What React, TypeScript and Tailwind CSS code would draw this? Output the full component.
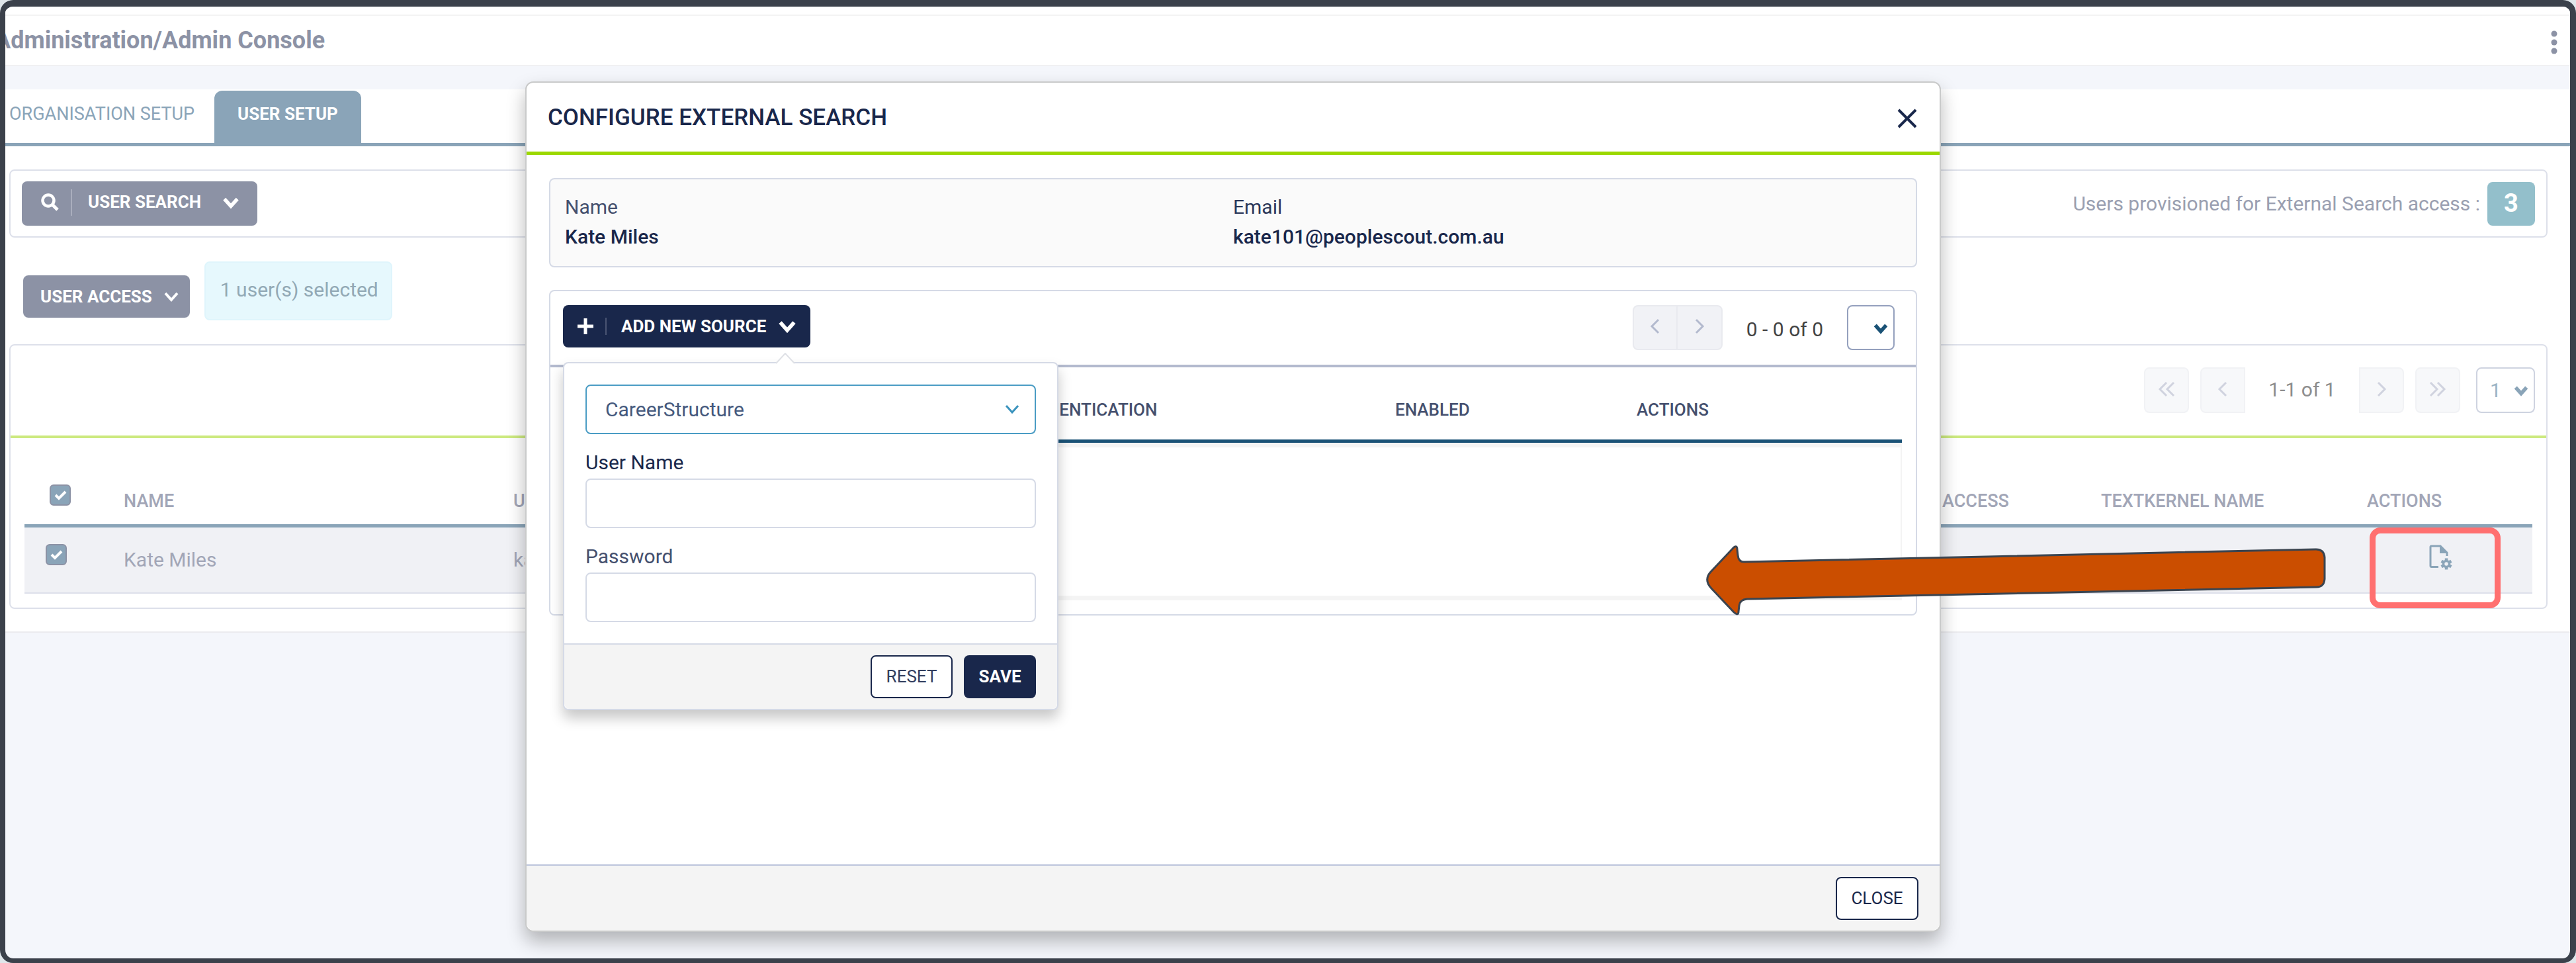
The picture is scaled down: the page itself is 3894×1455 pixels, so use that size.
import type { ReactNode } from "react";

type Dir = "left" | "right" | "down";

const CHEVRON: Record<Dir, string> = {
  left: "M17 2 L7 12 L17 22",
  right: "M7 2 L17 12 L7 22",
  down: "M3 7 L12 17 L21 7",
};

function Chevron({ dir, className, stroke = 3 }: { dir: Dir; className: string; stroke?: number }) {
  return (
    <svg viewBox="0 0 24 24" fill="none" stroke="currentColor" strokeWidth={stroke} className={className} aria-hidden="true">
      <path d={CHEVRON[dir]} />
    </svg>
  );
}

function DoubleChevron({ dir }: { dir: "left" | "right" }) {
  return (
    <svg viewBox="0 0 28 24" fill="none" stroke="currentColor" strokeWidth={3} className="h-6 w-7" aria-hidden="true">
      {dir === "left" ? <path d="M14 2 L4 12 L14 22 M25 2 L15 12 L25 22" /> : <path d="M3 2 L13 12 L3 22 M14 2 L24 12 L14 22" />}
    </svg>
  );
}

function SearchIcon() {
  return (
    <svg viewBox="0 0 27 27" fill="none" stroke="currentColor" className="h-[27px] w-[27px]" aria-hidden="true">
      <circle cx="11" cy="11" r="8.5" strokeWidth="4.5" />
      <path d="M17 17 L25 25" strokeWidth="5" />
    </svg>
  );
}

function FileGearIcon() {
  const teeth = [0, 60, 120, 180, 240, 300];
  return (
    <svg viewBox="0 0 35 38" className="h-[38px] w-[35px]" fill="none" stroke="currentColor" aria-hidden="true">
      <path d="M14 33.5 H3.5 Q2 33.5 2 32 V3.5 Q2 2 3.5 2 H17 L27 12 V17" strokeWidth="3" />
      <path d="M16 1 L28 13 H16 Z" fill="currentColor" stroke="none" />
      <circle cx="26" cy="29" r="4.5" strokeWidth="3.5" />
      {teeth.map((a) => (
        <path key={a} d="M26 24 V20.5" strokeWidth="4.5" transform={`rotate(${a} 26 29)`} />
      ))}
    </svg>
  );
}

function Arrow() {
  return (
    <svg
      viewBox="0 0 940 108"
      className="pointer-events-none absolute top-[813px] right-[369px] z-20 h-[108px] w-[940px]"
      aria-hidden="true"
    >
      <path
        d="M10 41 L43 6 C47 1 50 2 50 7 L51 16 Q52 26 60 26 L925 7 Q937 7 938 19 L938 52 Q937 64 926 64 L65 82 Q54 83 53 92 L52 101 C52 106 49 106 45 102 L11 66 Q-1 53 10 41 Z"
        fill="#cb4e00"
        stroke="#3b444f"
        strokeWidth="3"
        strokeLinejoin="round"
      />
    </svg>
  );
}

function Check({ label }: { label: string }) {
  return (
    <span className="relative block h-8 w-8">
      <input
        type="checkbox"
        defaultChecked
        aria-label={label}
        className="block h-8 w-8 appearance-none rounded-md border-2 border-[#8c92a5] bg-[#8aa4b8]"
      />
      <svg viewBox="0 0 32 32" fill="none" stroke="#fff" strokeWidth="4" className="pointer-events-none absolute inset-0" aria-hidden="true">
        <path d="M9 16 L14 21 L24 11" />
      </svg>
    </span>
  );
}

function PageButton({ label, className, children }: { label: string; className: string; children: ReactNode }) {
  return (
    <button
      type="button"
      aria-label={label}
      className={`flex h-[69px] w-[68px] items-center justify-center border-2 border-[#f1f2f5] bg-[#f7f8fa] pb-1 text-[#d0d3df] ${className}`}
    >
      {children}
    </button>
  );
}

const fieldClass = "block h-[75px] w-full rounded-lg border-2 bg-white px-7 text-[30px] outline-none";

function SourcePopup() {
  return (
    <form className="absolute top-[86px] left-0 z-10 w-[749px] rounded-lg border-2 border-[#d5dae6] bg-white shadow-[0_12px_20px_rgba(0,0,0,0.22)]">
      <svg viewBox="0 0 30 17" className="absolute -top-4 left-[319px] h-[17px] w-[30px]" aria-hidden="true">
        <path d="M1 16 L15 1 L29 16" fill="#fff" stroke="#dfe1e6" strokeWidth="2" />
      </svg>
      <div className="px-8 pt-8 pb-8">
        <div className="relative">
          <select aria-label="Source" className={`${fieldClass} appearance-none border-[#4a9cc4] text-[#45597d]`}>
            <option>CareerStructure</option>
          </select>
          <Chevron dir="down" stroke={3} className="pointer-events-none absolute top-[25px] right-6 h-6 w-6 text-[#3a93bd]" />
        </div>
        <label htmlFor="user-name" className="mt-[25px] mb-1.5 block text-[30px] leading-9">
          User Name
        </label>
        <input id="user-name" type="text" className={`${fieldClass} border-[#d5dae6]`} />
        <label htmlFor="password" className="mt-[25px] mb-1.5 block text-[30px] leading-9 text-[#45506e]">
          Password
        </label>
        <input id="password" type="password" className={`${fieldClass} border-[#d5dae6]`} />
      </div>
      <div className="flex justify-end gap-[17px] rounded-b-lg border-t-2 border-[#d5dae6] bg-[#f4f4f4] px-8 py-4">
        <button type="reset" className="h-[65px] w-[124px] rounded-lg border-2 border-[#19274b] bg-white text-[26px] text-[#323e5e]">
          RESET
        </button>
        <button type="button" className="h-[65px] w-[109px] rounded-lg bg-[#19274b] text-[26px] font-bold text-white">
          SAVE
        </button>
      </div>
    </form>
  );
}

function ConfigureDialog() {
  return (
    <div className="absolute inset-x-0 top-0 z-10 pt-[113px] pl-[786px] pr-[951px] text-[#19274b]">
      <section
        role="dialog"
        aria-labelledby="dialog-title"
        className="rounded-xl border-2 border-[#c9caca] bg-white shadow-[0_14px_28px_rgba(0,0,0,0.28)]"
      >
        <header className="flex h-[109px] items-center justify-between border-b-[5px] border-[#9bd800] pr-[34px] pl-8">
          <h2 id="dialog-title" className="text-[35px] leading-none font-medium">
            CONFIGURE EXTERNAL SEARCH
          </h2>
          <button type="button" aria-label="Close dialog" className="pt-1">
            <svg viewBox="0 0 30 30" fill="none" stroke="currentColor" strokeWidth="4" className="h-[30px] w-[30px]" aria-hidden="true">
              <path d="M2 2 L28 28 M28 2 L2 28" />
            </svg>
          </button>
        </header>

        <div className="min-h-[1072px] px-[34px] pt-[35px]">
          <dl className="grid grid-cols-2 rounded-lg border-2 border-[#d5dae6] bg-[#fafafa] px-[22px] pt-[19px] pb-[22px] text-[30px] leading-[45px]">
            <div>
              <dt className="text-[#45506e]">Name</dt>
              <dd className="font-medium">Kate Miles</dd>
            </div>
            <div>
              <dt className="text-[#2c3859]">Email</dt>
              <dd className="font-medium">kate101@peoplescout.com.au</dd>
            </div>
          </dl>

          <div className="mt-[34px] rounded-lg border-2 border-[#d5dae6] pb-[21px]">
            <div className="flex h-[115px] items-start justify-between border-b-4 border-[#b3bace] pt-[21px] pr-8 pl-[19px]">
              <div className="relative">
                <button type="button" className="flex h-16 items-center rounded-lg bg-[#19274b] pr-[21px] pl-[22px] text-[26px] font-bold text-white">
                  <svg viewBox="0 0 24 24" stroke="currentColor" strokeWidth="5" className="h-6 w-6" aria-hidden="true">
                    <path d="M12 0 V24 M0 12 H24" />
                  </svg>
                  <span className="mr-[22px] ml-[18px] h-[26px] w-0.5 bg-[#4a5573]" />
                  ADD NEW SOURCE
                  <Chevron dir="down" stroke={5} className="ml-[18px] h-7 w-7" />
                </button>
                <SourcePopup />
              </div>
              <div className="flex items-center text-[30px]">
                <button type="button" aria-label="Previous page" className="flex h-[68px] w-[68px] items-center justify-center rounded-l-lg border-2 border-[#e9eaef] bg-[#f1f2f6] pb-1 text-[#b3bace]">
                  <Chevron dir="left" className="h-6 w-6" />
                </button>
                <button type="button" aria-label="Next page" className="-ml-0.5 flex h-[68px] w-[70px] items-center justify-center rounded-r-lg border-2 border-[#e9eaef] bg-[#f1f2f6] pb-1 text-[#b3bace]">
                  <Chevron dir="right" className="h-6 w-6" />
                </button>
                <span className="mx-9 pt-1 text-[#444]">0 - 0 of 0</span>
                <div className="relative">
                  <select aria-label="Page" className="block h-[68px] w-[72px] appearance-none rounded-lg border-2 border-[#94a0bd] bg-white" />
                  <Chevron dir="down" stroke={6} className="pointer-events-none absolute top-6 right-2.5 h-[22px] w-[22px] text-[#1a5276]" />
                </div>
              </div>
            </div>

            <div className="mx-[21px]">
              <table className="w-full table-fixed border-collapse text-left text-[26px] text-[#45506e]">
                <thead>
                  <tr className="h-[111px] border-b-[5px] border-[#1a5276]">
                    <th className="w-[680px]" aria-label="Source" />
                    <th className="w-[576px] px-0 pt-5 pb-0 font-medium">AUTHENTICATION</th>
                    <th className="w-[365px] px-0 pt-5 pb-0 font-medium">ENABLED</th>
                    <th className="px-0 pt-5 pb-0 font-medium">ACTIONS</th>
                  </tr>
                </thead>
              </table>
              <div className="h-[238px] border-y-[7px] border-r-2 border-[#f4f4f4]" />
            </div>
          </div>
        </div>

        <footer className="flex justify-end rounded-b-xl border-t-2 border-[#bcc4dc] bg-[#f4f4f4] pt-[17px] pr-8 pb-4">
          <button type="button" className="h-[65px] w-[125px] rounded-lg border-2 border-[#19274b] bg-white text-[26px]">
            CLOSE
          </button>
        </footer>
      </section>
    </div>
  );
}

export default function App() {
  return (
    <div className="min-h-screen bg-[#dfe6ea] font-[Roboto,sans-serif]">
      <div className="relative min-h-screen overflow-hidden rounded-[20px] border-t-[10px] border-r-[9px] border-b-[7px] border-l-8 border-[#3b414b] bg-[#f4f6fb] text-[#19274b]">
        <header className="border-b-2 border-[#f0f0f2] bg-white pt-3">
          <div className="flex h-[76px] items-center justify-between border-t-2 border-[#f3f3f3] pr-[19px]">
            <h1 className="-ml-4 text-[36px] leading-none font-bold text-[#8c92a5]">Administration/Admin Console</h1>
            <button type="button" aria-label="More options" className="pt-1.5 text-[#8c92a5]">
              <svg viewBox="0 0 10 36" fill="currentColor" className="h-9 w-2.5" aria-hidden="true">
                <circle cx="5" cy="5" r="4.5" />
                <circle cx="5" cy="18" r="4.5" />
                <circle cx="5" cy="31" r="4.5" />
              </svg>
            </button>
          </div>
        </header>

        <main className="mt-[35px] border-b-2 border-[#ebebef] bg-white pb-[34px]">
          <nav className="flex h-[86px] border-b-[5px] border-[#8aa4b8] pt-0.5">
            <button type="button" className="w-[316px] pb-2 pl-1.5 text-left text-[27px] text-[#8aa4b8]">
              ORGANISATION SETUP
            </button>
            <button type="button" className="w-[222px] rounded-t-xl bg-[#8aa4b8] pb-2 text-[26px] font-bold text-white">
              USER SETUP
            </button>
          </nav>

          <div className="mt-[35px] mr-[34px] ml-1.5">
            <div className="flex items-center justify-between rounded-lg border-2 border-[#dde0ea] px-[17px] py-4">
              <button type="button" className="flex h-[67px] items-center rounded-lg bg-[#8c92a5] pr-[27px] pb-1 pl-[29px] text-[26px] font-bold text-white">
                <SearchIcon />
                <span className="mr-6 ml-[18px] h-10 w-0.5 bg-[#a9aebd]" />
                USER SEARCH
                <Chevron dir="down" stroke={5} className="ml-8 h-[26px] w-[26px]" />
              </button>
              <div className="flex items-center text-[30px] text-[#9a9fb1]">
                Users provisioned for External Search access :
                <span className="ml-[11px] flex h-[66px] w-[72px] items-center justify-center rounded-lg bg-[#93bfcb] text-[38px] font-bold text-white">3</span>
              </div>
            </div>

            <div className="mt-9 ml-[21px] flex items-end gap-[22px]">
              <button type="button" className="mb-1 flex h-16 items-center rounded-lg bg-[#8c92a5] pr-4 pl-[26px] text-[26px] font-bold text-white">
                USER ACCESS
                <Chevron dir="down" stroke={4} className="ml-[17px] h-6 w-6" />
              </button>
              <div className="flex h-[89px] w-[284px] items-center rounded-lg border-2 border-[#dff5fc] bg-[#e6f8fd] pb-1 pl-[22px] text-[30px] text-[#92a9b5]">
                1 user(s) selected
              </div>
            </div>

            <div className="mt-9 rounded-lg border-2 border-[#dde0ea] pb-[21px]">
              <div className="flex h-[140px] items-start justify-end border-b-4 border-[#cce97f] pt-[33px] pr-[17px] text-[30px]">
                <PageButton label="First page" className="rounded-lg">
                  <DoubleChevron dir="left" />
                </PageButton>
                <PageButton label="Previous page" className="ml-[17px] rounded-l-lg">
                  <Chevron dir="left" className="h-6 w-6" />
                </PageButton>
                <span className="w-[172px] text-center leading-[68px] text-[#8d8d8d]">1-1 of 1</span>
                <PageButton label="Next page" className="rounded-r-lg">
                  <Chevron dir="right" className="h-6 w-6" />
                </PageButton>
                <PageButton label="Last page" className="ml-[17px] rounded-lg">
                  <DoubleChevron dir="right" />
                </PageButton>
                <div className="relative ml-6">
                  <select aria-label="Page number" className="block h-[69px] w-[89px] appearance-none rounded-lg border-2 border-[#ced3e0] bg-white pl-[19px] text-[#9ab3c4]">
                    <option>1</option>
                  </select>
                  <Chevron dir="down" stroke={6} className="pointer-events-none absolute top-6 right-2.5 h-[22px] w-[22px] text-[#8aa4b8]" />
                </div>
              </div>

              <div className="mx-[21px]">
                <table className="w-full table-fixed border-collapse text-left text-[#a2a6b7]">
                  <thead className="text-[27px] leading-10">
                    <tr className="h-[132px] border-b-[5px] border-[#8aa4b8] align-bottom">
                      <th className="w-[150px] pb-7 pl-[38px]">
                        <Check label="Select all users" />
                      </th>
                      <th className="w-[589px] px-0 pb-[15px] font-medium">NAME</th>
                      <th className="px-0 pb-[15px] font-medium">USER NAME</th>
                      <th className="w-[240px] px-0 pb-[15px] font-medium">ACCESS</th>
                      <th className="w-[402px] px-0 pb-[15px] font-medium">TEXTKERNEL NAME</th>
                      <th className="w-[250px] px-0 pb-[15px] font-medium">ACTIONS</th>
                    </tr>
                  </thead>
                  <tbody className="text-[30px]">
                    <tr className="h-[102px] border-b-2 border-[#dde0ea] bg-[#f0f1f5]">
                      <td className="pb-4 pl-8">
                        <Check label="Select Kate Miles" />
                      </td>
                      <td className="px-0">Kate Miles</td>
                      <td className="px-0">kate101@peoplescout.com.au</td>
                      <td />
                      <td />
                      <td className="relative pb-2 pl-[94px]">
                        <button type="button" aria-label="Configure external search" className="block text-[#8aa4b8]">
                          <FileGearIcon />
                        </button>
                        <span className="pointer-events-none absolute top-0 left-1 h-[122px] w-[198px] rounded-2xl border-[9px] border-[#ff7070]" />
                      </td>
                    </tr>
                  </tbody>
                </table>
              </div>
            </div>
          </div>
        </main>

        <ConfigureDialog />
        <Arrow />
      </div>
    </div>
  );
}
